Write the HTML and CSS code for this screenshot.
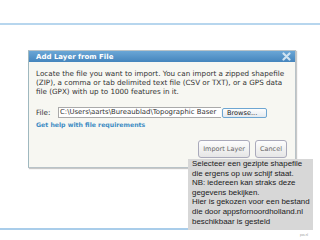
FILE: index.html
```html
<!DOCTYPE html>
<html>
<head>
<meta charset="utf-8">
<link rel="stylesheet" href="styles.css">
</head>
<body>
<div class="page">
  <div class="rule-top"></div>
  <div class="dialog">
    <div class="titlebar">
      <span class="title">Add Layer from File</span>
      <svg class="close" width="9" height="9" viewBox="0 0 9 9"><path d="M1.5 1.5 L7.5 7.5 M7.5 1.5 L1.5 7.5" stroke="#cfe3f1" stroke-width="2.2" stroke-linecap="round"/></svg>
    </div>
    <div class="body">
      <p class="intro">Locate the file you want to import. You can import a zipped shapefile<br>(ZIP), a comma or tab delimited text file (CSV or TXT), or a GPS data<br>file (GPX) with up to 1000 features in it.</p>
      <div class="filerow">
        <span class="label">File:</span>
        <span class="input">C:\Users\aarts\Bureaublad\Topographic Baser</span>
        <span class="browse">Browse...</span>
      </div>
      <a class="help">Get help with file requirements</a>
      <div class="actions">
        <span class="btn">Import Layer</span>
        <span class="btn">Cancel</span>
      </div>
    </div>
  </div>
  <div class="rule-bottom"></div>
  <div class="credit">pos.nl</div>
  <div class="note">Selecteer een gezipte shapefile<br>die ergens op uw schijf staat.<br>NB: iedereen kan straks deze<br>gegevens bekijken.<br>Hier is gekozen voor een bestand<br>die door appsfornoordholland.nl<br>beschikbaar is gesteld</div>
</div>
</body>
</html>
```
FILE: styles.css
```css
html, body { margin: 0; padding: 0; background: #fff; }
.page { position: relative; width: 320px; height: 240px; overflow: hidden; font-family: "Liberation Sans", Arial, sans-serif; }
.rule-top { margin-top: 23px; height: 2px; background: #b7d6ee; }
.dialog { margin: 25px 24px 0 28px; height: 116px; border: 1px solid #b9c3c8; border-left-color: #9fb8bf; box-shadow: 1px 1px 1px #c8c8c8; background: #f7f7f2; display: flex; flex-direction: column; }
.titlebar { height: 11px; background: linear-gradient(#6aa6d6, #4585bd); display: flex; align-items: center; justify-content: space-between; padding: 0 4px 0 7px; }
.title { color: #fff; font-family: "DejaVu Sans", Verdana, sans-serif; font-weight: bold; font-size: 7px; }
.close { display: block; }
.body { padding: 7px 6px 0 7px; font-family: "DejaVu Sans", Verdana, sans-serif; font-size: 7.2px; color: #333; flex: 1; display: flex; flex-direction: column; }
.intro { margin: 0; line-height: 9px; white-space: nowrap; }
.filerow { display: flex; align-items: center; margin-top: 11px; height: 11px; }
.label { width: 22px; }
.input { width: 161px; height: 9px; line-height: 9px; border: 1px solid #aaa; border-right: none; background: #fff; padding-left: 1px; white-space: nowrap; overflow: hidden; font-size: 6.9px; }
.browse { width: 39px; height: 8px; line-height: 8px; border: 1px solid #6ea6d2; border-radius: 2px; background: linear-gradient(#fdfdfd, #e4eaf0); margin-left: 1px; padding-left: 4px; color: #222; font-size: 6.6px; }
.help { margin-top: 3px; color: #3d8cc4; font-weight: bold; font-size: 6.2px; }
.actions { display: flex; justify-content: flex-end; gap: 5px; margin-top: 12px; padding-right: 2px; }
.btn { height: 16px; line-height: 16px; padding: 0 4px; border: 1px solid #aab; border-radius: 3px; background: linear-gradient(#fdfdfd, #e6e6e6); color: #666; font-size: 6.5px; }
.rule-bottom { margin-top: 60px; width: 300px; height: 2px; background: #a9cdea; }
.credit { text-align: right; padding-right: 12px; font-size: 3px; color: #999; margin-top: 3px; }
.note { position: absolute; left: 188px; top: 159px; width: 121px; height: 71px; padding: 0 0 0 4px; background: #d7d7d7; color: #1a1a1a; font-size: 7.9px; line-height: 9.6px; white-space: nowrap; }
```
